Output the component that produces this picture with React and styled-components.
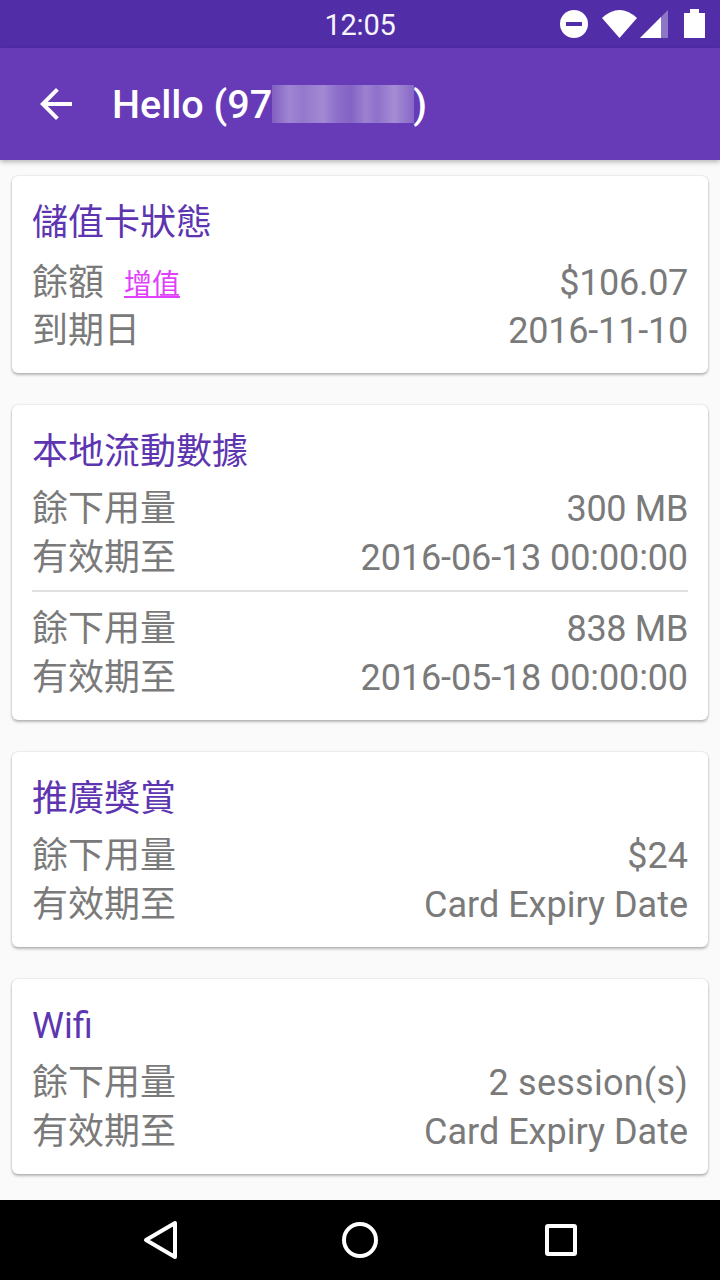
import React from 'react';
import styled, { createGlobalStyle } from 'styled-components';

const Global = createGlobalStyle`
  html, body {
    margin: 0;
    padding: 0;
    background: #fafafa;
  }
  * {
    box-sizing: border-box;
  }
`;

const Screen = styled.div`
  width: 720px;
  height: 1280px;
  display: flex;
  flex-direction: column;
  overflow: hidden;
  font-family: Roboto, "Noto Sans CJK TC", sans-serif;
`;

const StatusBar = styled.div`
  height: 48px;
  flex-shrink: 0;
  background: #512da8;
  position: relative;
  display: flex;
  justify-content: center;
  align-items: center;
  color: #fff;
`;

const Time = styled.span`
  font-size: 29px;
  line-height: 48px;
  padding-top: 2px;
  letter-spacing: -0.2px;
  opacity: 0.95;
`;

const StatusIcons = styled.div`
  position: absolute;
  right: 0;
  top: 0;
  height: 48px;
`;

const Toolbar = styled.header`
  height: 112px;
  flex-shrink: 0;
  background: #673ab7;
  display: flex;
  align-items: center;
  padding-left: 32px;
  gap: 32px;
  color: #fff;
  box-shadow: 0 2px 5px rgba(0, 0, 0, 0.28);
  z-index: 1;
`;

const Title = styled.h1`
  margin: 0;
  font-size: 39.5px;
  font-weight: 500;
  line-height: 48px;
  padding-top: 2px;
  display: flex;
  align-items: center;
`;

const Redacted = styled.span`
  width: 142px;
  height: 38px;
  margin: -2px -1px 0 0;
  background:
    linear-gradient(90deg,
      rgba(255,255,255,0.05) 0,
      rgba(255,255,255,0.28) 12%,
      rgba(255,255,255,0.2) 22%,
      rgba(255,255,255,0.3) 36%,
      rgba(255,255,255,0.14) 46%,
      rgba(255,255,255,0.08) 56%,
      rgba(255,255,255,0.26) 66%,
      rgba(255,255,255,0.16) 74%,
      rgba(255,255,255,0.32) 86%,
      rgba(255,255,255,0.1) 100%),
    #7a56c0;
`;

const Content = styled.main`
  flex: 1;
  display: flex;
  flex-direction: column;
  gap: 32px;
  padding: 16px 12px 0;
  background: #fafafa;
`;

const Card = styled.section`
  background: #fff;
  border-radius: 6px;
  padding: 22px 20px 18px 20px;
  box-shadow: 0 0 2px rgba(0, 0, 0, 0.18), 0 2px 3px rgba(0, 0, 0, 0.26);
`;

const CardTitle = styled.h2`
  margin: 0 0 9px;
  padding-top: 1px;
  height: 48px;
  font-size: 36px;
  font-weight: 400;
  line-height: 48px;
  color: #5e35b1;
`;

const Row = styled.div`
  display: flex;
  justify-content: space-between;
  align-items: center;
  height: ${(p) => (p.$tall ? 51 : 49)}px;
  padding-top: ${(p) => (p.$tall ? 4 : 0)}px;
  font-size: 36px;
  color: #7a7a7a;
`;

const Label = styled.span`
  display: flex;
  align-items: center;
  gap: 20px;
  margin-bottom: 8px;
`;

const Value = styled.span`
  letter-spacing: ${(p) => p.$track || 0}px;
`;

const TopUp = styled.a`
  font-size: 28px;
  color: #e040fb;
  text-decoration: underline;
  margin-top: 6px;
`;

const Divider = styled.hr`
  border: 0;
  height: 2px;
  margin: 8px 0 12px;
  background: #e0e0e0;
`;

const NavBar = styled.nav`
  height: 80px;
  flex-shrink: 0;
  background: #000;
  display: flex;
  justify-content: center;
  align-items: center;
`;

const Balance = ({ title, rows }) => (
  <Card>
    <CardTitle>{title}</CardTitle>
    {rows.map((group, i) => (
      <React.Fragment key={i}>
        {i > 0 && <Divider />}
        {group.map(([label, value, track]) => (
          <Row key={label}>
            <Label>{label}</Label>
            <Value $track={track}>{value}</Value>
          </Row>
        ))}
      </React.Fragment>
    ))}
  </Card>
);

export default function App() {
  return (
    <Screen>
      <Global />
      <StatusBar>
        <Time>12:05</Time>
        <StatusIcons>
          <svg width="170" height="48" viewBox="550 0 170 48">
            <circle cx="574" cy="24" r="14" fill="#fff" />
            <rect x="566" y="22" width="16" height="4" fill="#512da8" />
            <path d="M602 18 Q619.5 2 637 18 L619.5 38 Z" fill="#fff" />
            <path d="M640 38 L668 10 V38 Z" fill="#fff" fillOpacity="0.35" />
            <path d="M640 38 L661 17 V38 Z" fill="#fff" />
            <path d="M684 13 H690 V9 H699 V13 H705 V38 H684 Z" fill="#fff" />
          </svg>
        </StatusIcons>
      </StatusBar>
      <Toolbar>
        <svg width="48" height="48" viewBox="0 0 24 24" fill="#fff">
          <path d="M20 11H7.83l5.59-5.59L12 4l-8 8 8 8 1.41-1.41L7.83 13H20v-2z" />
        </svg>
        <Title>
          Hello (97<Redacted />)
        </Title>
      </Toolbar>
      <Content>
        <Card>
          <CardTitle>儲值卡狀態</CardTitle>
          <Row $tall>
            <Label>
              餘額
              <TopUp>增值</TopUp>
            </Label>
            <Value $track={-0.3}>$106.07</Value>
          </Row>
          <Row>
            <Label>到期日</Label>
            <Value $track={-0.2}>2016-11-10</Value>
          </Row>
        </Card>
        <Balance
          title="本地流動數據"
          rows={[
            [['餘下用量', '300 MB', -0.33], ['有效期至', '2016-06-13 00:00:00', -0.11]],
            [['餘下用量', '838 MB', -0.33], ['有效期至', '2016-05-18 00:00:00', -0.11]],
          ]}
        />
        <Balance
          title="推廣獎賞"
          rows={[[['餘下用量', '$24'], ['有效期至', 'Card Expiry Date']]]}
        />
        <Balance
          title="Wifi"
          rows={[[['餘下用量', '2 session(s)', 0.25], ['有效期至', 'Card Expiry Date']]]}
        />
      </Content>
      <NavBar>
        <svg width="720" height="80" viewBox="0 1200 720 80" fill="none" stroke="#fff" strokeWidth="4" strokeLinejoin="round">
          <path d="M175 1223 V1257 L146 1240 Z" />
          <circle cx="360" cy="1240" r="16" />
          <rect x="547" y="1226" width="28" height="28" rx="1" />
        </svg>
      </NavBar>
    </Screen>
  );
}
